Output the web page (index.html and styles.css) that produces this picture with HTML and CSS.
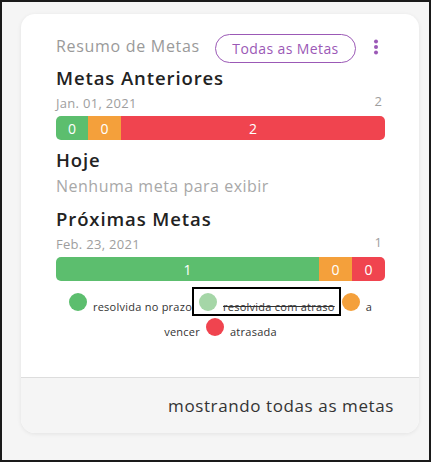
FILE: index.html
```html
<!DOCTYPE html>
<html lang="pt">
<head>
<meta charset="utf-8">
<link rel="stylesheet" href="styles.css">
</head>
<body>
<div class="frame">
  <div class="card">
    <div class="card-body">
      <div class="header">
        <span class="title">Resumo de Metas</span>
        <div class="actions">
          <button class="pill">Todas as Metas</button>
          <svg class="kebab" width="6" height="16" viewBox="0 0 6 16"><circle cx="3" cy="2.5" r="2" fill="#9b59b6"/><circle cx="3" cy="8" r="2" fill="#9b59b6"/><circle cx="3" cy="13.5" r="2" fill="#9b59b6"/></svg>
        </div>
      </div>

      <h2 class="section">Metas Anteriores</h2>
      <div class="meta-row"><span class="date">Jan. 01, 2021</span><span class="count">2</span></div>
      <div class="bar">
        <div class="seg green" style="width:32px">0</div>
        <div class="seg orange" style="width:33px">0</div>
        <div class="seg red grow">2</div>
      </div>

      <h2 class="section">Hoje</h2>
      <p class="empty">Nenhuma meta para exibir</p>

      <h2 class="section">Próximas Metas</h2>
      <div class="meta-row"><span class="date">Feb. 23, 2021</span><span class="count">1</span></div>
      <div class="bar">
        <div class="seg green grow">1</div>
        <div class="seg orange" style="width:33px">0</div>
        <div class="seg red" style="width:33px">0</div>
      </div>

      <div class="legend"><span class="dot green"></span><span class="lbl">resolvida no prazo</span><span class="boxed"><span class="dot light"></span><span class="lbl struck">resolvida com atraso</span></span><span class="dot orange tight"></span><span class="lbl">a vencer</span><span class="dot red spaced"></span><span class="lbl">atrasada</span></div>
    </div>
    <div class="card-footer">mostrando todas as metas</div>
  </div>
</div>
</body>
</html>
```
FILE: styles.css
```css
html, body { margin: 0; padding: 0; }
body {
  font-family: "Open Sans", "Noto Sans", sans-serif;
  background: #f5f5f5;
}
.frame {
  box-sizing: border-box;
  width: 431px;
  height: 462px;
  border: 2px solid #1a1a1a;
  padding: 12px 10px 0 19px;
}
.card {
  width: 398px;
  background: #fff;
  border-radius: 14px;
  box-shadow: 0 1px 4px rgba(0,0,0,0.08);
  overflow: hidden;
}
.card-body {
  box-sizing: border-box;
  height: 363px;
  padding: 20px 34px 0 35px;
}
.header {
  display: flex;
  align-items: center;
  justify-content: space-between;
  height: 29px;
}
.title {
  font-size: 16px;
  letter-spacing: 0.7px;
  color: #9a9a9a;
  margin-top: -6px;
}
.actions { display: flex; align-items: center; gap: 17px; }
.pill {
  font-family: inherit;
  font-size: 14px;
  letter-spacing: 0.4px;
  color: #9b59b6;
  background: #fff;
  border: 1px solid #9b59b6;
  border-radius: 15px;
  width: 141px;
  height: 29px;
  padding: 0;
}
.kebab { margin-right: 6px; margin-top: -3px; }
.section {
  margin: 0;
  font-size: 18.5px;
  letter-spacing: 0.9px;
  font-weight: 600;
  color: #222;
  line-height: 24px;
}
.header + .section { margin-top: 3px; }
.meta-row {
  display: flex;
  justify-content: space-between;
  align-items: flex-start;
  margin-top: 5px;
  height: 17px;
}
.date { font-size: 13px; letter-spacing: 0.3px; color: #9e9e9e; line-height: 17px; }
.count { font-size: 13px; color: #9e9e9e; line-height: 13px; padding-right: 3px; }
.bar {
  display: flex;
  height: 24px;
  margin-top: 4px;
  border-radius: 5px;
  overflow: hidden;
}
.seg {
  display: flex;
  align-items: center;
  justify-content: center;
  color: #fff;
  font-size: 14px;
}
.grow { flex: 1; }
.seg.green, .dot.green { background: #5cbe6e; }
.seg.orange, .dot.orange { background: #f4a03b; }
.seg.red, .dot.red { background: #f0444f; }
.dot.light { background: #a5d6a7; }
.bar + .section { margin-top: 8px; }
.empty {
  margin: 4px 0 0;
  font-size: 16px;
  letter-spacing: 0.5px;
  color: #a8a8a8;
  line-height: 20px;
}
.empty + .section { margin-top: 11px; }
.legend {
  margin-top: 6px;
  padding: 0 2px;
  text-align: center;
  font-size: 11px;
  letter-spacing: 0.25px;
  color: #333;
  line-height: 23px;
}
.lbl { white-space: normal; }
.dot {
  display: inline-block;
  width: 18px;
  height: 18px;
  border-radius: 50%;
  vertical-align: baseline;
  margin: 0 6px 0 0;
}
.dot.tight { margin-left: 1px; margin-right: 6px; }
.dot.spaced { margin-left: 6px; }
.boxed {
  display: inline-block;
  box-sizing: border-box;
  height: 29px;
  border: 2px solid #000;
  padding: 4px 4px 0 5px;
  line-height: 15px;
  white-space: nowrap;
}
.struck { text-decoration: line-through; }
.card-footer {
  background: #f5f5f5;
  border-top: 1px solid #ddd;
  height: 55px;
  display: flex;
  align-items: center;
  justify-content: flex-end;
  padding-right: 25px;
  font-size: 17px;
  letter-spacing: 0.6px;
  color: #333;
}
```
